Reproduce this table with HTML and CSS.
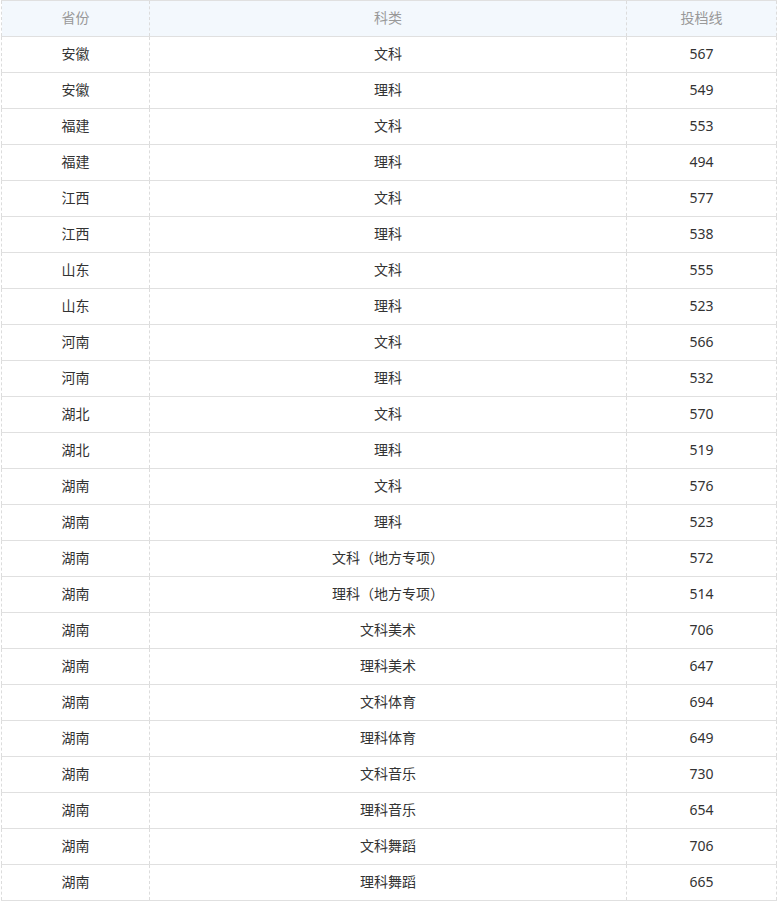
FILE: index.html
```html
<!DOCTYPE html>
<html lang="zh-CN">
<head>
<meta charset="utf-8">
<title>投档线</title>
<link rel="stylesheet" href="styles.css">
</head>
<body>
<table class="score-table">
  <colgroup>
    <col class="c-prov">
    <col class="c-type">
    <col class="c-score">
  </colgroup>
  <thead>
    <tr><th>省份</th><th>科类</th><th>投档线</th></tr>
  </thead>
  <tbody>
    <tr><td>安徽</td><td>文科</td><td>567</td></tr>
    <tr><td>安徽</td><td>理科</td><td>549</td></tr>
    <tr><td>福建</td><td>文科</td><td>553</td></tr>
    <tr><td>福建</td><td>理科</td><td>494</td></tr>
    <tr><td>江西</td><td>文科</td><td>577</td></tr>
    <tr><td>江西</td><td>理科</td><td>538</td></tr>
    <tr><td>山东</td><td>文科</td><td>555</td></tr>
    <tr><td>山东</td><td>理科</td><td>523</td></tr>
    <tr><td>河南</td><td>文科</td><td>566</td></tr>
    <tr><td>河南</td><td>理科</td><td>532</td></tr>
    <tr><td>湖北</td><td>文科</td><td>570</td></tr>
    <tr><td>湖北</td><td>理科</td><td>519</td></tr>
    <tr><td>湖南</td><td>文科</td><td>576</td></tr>
    <tr><td>湖南</td><td>理科</td><td>523</td></tr>
    <tr><td>湖南</td><td>文科（地方专项）</td><td>572</td></tr>
    <tr><td>湖南</td><td>理科（地方专项）</td><td>514</td></tr>
    <tr><td>湖南</td><td>文科美术</td><td>706</td></tr>
    <tr><td>湖南</td><td>理科美术</td><td>647</td></tr>
    <tr><td>湖南</td><td>文科体育</td><td>694</td></tr>
    <tr><td>湖南</td><td>理科体育</td><td>649</td></tr>
    <tr><td>湖南</td><td>文科音乐</td><td>730</td></tr>
    <tr><td>湖南</td><td>理科音乐</td><td>654</td></tr>
    <tr><td>湖南</td><td>文科舞蹈</td><td>706</td></tr>
    <tr><td>湖南</td><td>理科舞蹈</td><td>665</td></tr>
  </tbody>
</table>
</body>
</html>
```

FILE: styles.css
```css
html, body {
  margin: 0;
  padding: 0;
  background: #fff;
}

body {
  font-family: "Noto Sans", "Noto Sans CJK SC", sans-serif;
  font-size: 14px;
  color: #333;
}

.score-table {
  margin-left: 1px;
  width: 775px;
  border-collapse: collapse;
  table-layout: fixed;
}

.c-prov { width: 148px; }
.c-type { width: 477px; }
.c-score { width: 150px; }

.score-table th,
.score-table td {
  height: 33px;
  padding: 0 0 2px;
  text-align: center;
  vertical-align: middle;
  border-top: 1px solid #e0e0e0;
  border-bottom: 1px solid #e0e0e0;
  border-left: 1px dashed #dcdcdc;
  border-right: 1px dashed #dcdcdc;
  line-height: 20px;
}

.score-table th {
  font-weight: normal;
  color: #999;
  background: #f3f8fd;
}
```
